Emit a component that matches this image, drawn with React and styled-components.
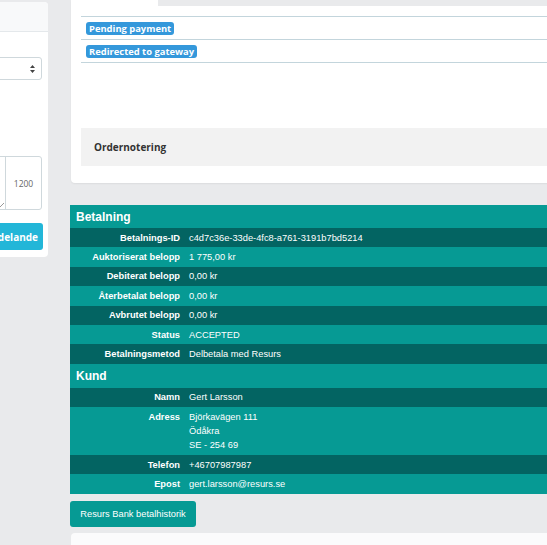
import React from 'react';
import styled, { createGlobalStyle } from 'styled-components';

const GlobalStyle = createGlobalStyle`
  html, body {
    margin: 0;
    padding: 0;
    background-color: #e9eaec;
    overflow: hidden;
    font-family: 'Open Sans', 'Liberation Sans', sans-serif;
  }
`;

const Page = styled.div`
  display: flex;
  align-items: flex-start;
  gap: 22px;
  width: 547px;
  height: 545px;
  overflow: hidden;
`;

const SideCard = styled.div`
  flex: 0 0 200px;
  margin-left: -152px;
  margin-top: 2px;
  height: 255px;
  background-color: #fff;
  border-radius: 4px;
  box-sizing: border-box;
  display: flex;
  flex-direction: column;
`;

const SideHeader = styled.div`
  height: 29px;
  background-color: #f8f9fa;
  border-bottom: 1px solid #e4e8eb;
  border-radius: 4px 4px 0 0;
`;

const SideBody = styled.div`
  padding: 25px 6px 0 0;
  display: flex;
  flex-direction: column;
`;

const Select = styled.div`
  height: 23px;
  border: 1px solid #cfd8dc;
  border-radius: 3px;
  box-sizing: border-box;
  display: flex;
  align-items: center;
  justify-content: flex-end;
  padding-right: 6px;
`;

const TextArea = styled.div`
  margin-top: 76px;
  height: 54px;
  border: 1px solid #cfd8dc;
  border-radius: 3px;
  box-sizing: border-box;
  display: flex;
  justify-content: flex-end;
`;

const Addon = styled.div`
  width: 35px;
  border-left: 1px solid #cfd8dc;
  display: flex;
  align-items: center;
  justify-content: center;
  font-size: 8.5px;
  color: #666;
  position: relative;
`;

const Grip = styled.span`
  position: absolute;
  left: -7px;
  bottom: 1px;
  width: 5px;
  height: 5px;
  background: linear-gradient(135deg, transparent 45%, #999 46%, #999 54%, transparent 55%, transparent 70%, #999 71%, #999 79%, transparent 80%);
`;

const SideButton = styled.div`
  margin-top: 13px;
  margin-right: -1px;
  height: 27px;
  background-color: #22b6d8;
  border-radius: 3px;
  color: #fff;
  font-weight: 700;
  font-size: 10px;
  display: flex;
  align-items: center;
  justify-content: flex-end;
  padding-right: 5px;
`;

const Main = styled.div`
  flex: 0 0 490px;
  display: flex;
  flex-direction: column;
`;

const Card = styled.div`
  background-color: #fff;
  margin-left: 1px;
  border-radius: 0 0 4px 4px;
  box-shadow: 0 1px 2px rgba(0, 0, 0, 0.06);
`;

const Tabs = styled.div`
  display: flex;
  height: 6px;
  background-color: #fff;
`;

const Tab = styled.div`
  flex: ${(p) => (p.active ? '0 0 87px' : '1')};
  background-color: ${(p) => (p.active ? '#fff' : '#e9eaec')};
`;

const CardBody = styled.div`
  padding: 10px 0 17px 10px;
`;

const StatusList = styled.div`
  border-bottom: 1px solid #c3d5dc;
`;

const StatusRow = styled.div`
  border-top: 1px solid #c3d5dc;
  height: 22px;
  display: flex;
  align-items: center;
  padding-left: 5px;
`;

const Badge = styled.span`
  background-color: #3498db;
  color: #fff;
  font-weight: 700;
  font-size: 9.4px;
  line-height: 13px;
  height: 13px;
  padding: 0 3px;
  border-radius: 3px;
`;

const Note = styled.div`
  margin-top: 65px;
  height: 38px;
  background-color: #f2f2f2;
  display: flex;
  align-items: center;
  padding-left: 13px;
  font-weight: 700;
  font-size: 10px;
  color: #333;
`;

const PayTable = styled.table`
  margin-top: 22px;
  width: 100%;
  border-collapse: collapse;
  font-family: 'Liberation Sans', Arial, sans-serif;
  color: #fff;
`;

const SectionRow = styled.tr`
  background-color: #069a94;
`;

const SectionTitle = styled.th`
  height: ${(p) => p.h || 23}px;
  padding: 0 6px;
  text-align: left;
  font-size: 12px;
  font-weight: 700;
`;

const Row = styled.tr`
  background-color: ${(p) => (p.dark ? '#036462' : '#069a94')};
`;

const Label = styled.td`
  width: 110px;
  padding: 2.6px 9px 2.6px 0;
  text-align: right;
  vertical-align: top;
  font-size: 9.3px;
  line-height: 14.2px;
  font-weight: 700;
`;

const Value = styled.td`
  padding: 2.6px 0;
  vertical-align: top;
  font-size: 9.3px;
  line-height: 14.2px;
`;

const HistoryButton = styled.div`
  margin-top: 7px;
  align-self: flex-start;
  width: 126px;
  height: 26px;
  background-color: #069a94;
  border-radius: 3px;
  color: #fff;
  font-family: 'Liberation Sans', Arial, sans-serif;
  font-size: 9.3px;
  display: flex;
  align-items: center;
  justify-content: center;
`;

const BottomCard = styled.div`
  margin-top: 6px;
  margin-left: 1px;
  height: 40px;
  background-color: #fbfbfc;
  border-radius: 4px 4px 0 0;
`;

const SortIcon = () => (
  <svg width="5" height="8" viewBox="0 0 5 8">
    <path d="M2.5 0 L5 3 H0 Z M2.5 8 L5 5 H0 Z" fill="#444" />
  </svg>
);

const payment = [
  ['Betalnings-ID', 'c4d7c36e-33de-4fc8-a761-3191b7bd5214'],
  ['Auktoriserat belopp', '1 775,00 kr'],
  ['Debiterat belopp', '0,00 kr'],
  ['Återbetalat belopp', '0,00 kr'],
  ['Avbrutet belopp', '0,00 kr'],
  ['Status', 'ACCEPTED'],
  ['Betalningsmetod', 'Delbetala med Resurs'],
];

const customer = [
  ['Namn', ['Gert Larsson']],
  ['Adress', ['Björkavägen 111', 'Ödåkra', 'SE - 254 69']],
  ['Telefon', ['+46707987987']],
  ['Epost', ['gert.larsson@resurs.se']],
];

const App = () => {
  return (
    <>
      <GlobalStyle />
      <Page>
        <SideCard>
          <SideHeader />
          <SideBody>
            <Select>
              <SortIcon />
            </Select>
            <TextArea>
              <Addon>
                <Grip />
                1200
              </Addon>
            </TextArea>
            <SideButton>Skicka meddelande</SideButton>
          </SideBody>
        </SideCard>
        <Main>
          <Card>
            <Tabs>
              <Tab active />
              <Tab />
            </Tabs>
            <CardBody>
              <StatusList>
                <StatusRow>
                  <Badge>Pending payment</Badge>
                </StatusRow>
                <StatusRow>
                  <Badge>Redirected to gateway</Badge>
                </StatusRow>
              </StatusList>
              <Note>Ordernotering</Note>
            </CardBody>
          </Card>
          <PayTable>
            <tbody>
              <SectionRow>
                <SectionTitle colSpan={2}>Betalning</SectionTitle>
              </SectionRow>
              {payment.map(([label, value], i) => (
                <Row key={label} dark={i % 2 === 0}>
                  <Label>{label}</Label>
                  <Value>{value}</Value>
                </Row>
              ))}
              <SectionRow>
                <SectionTitle colSpan={2} h={24}>Kund</SectionTitle>
              </SectionRow>
              {customer.map(([label, lines], i) => (
                <Row key={label} dark={i % 2 === 0}>
                  <Label>{label}</Label>
                  <Value>
                    {lines.map((line) => (
                      <div key={line}>{line}</div>
                    ))}
                  </Value>
                </Row>
              ))}
            </tbody>
          </PayTable>
          <HistoryButton>Resurs Bank betalhistorik</HistoryButton>
          <BottomCard />
        </Main>
      </Page>
    </>
  );
};

export default App;
